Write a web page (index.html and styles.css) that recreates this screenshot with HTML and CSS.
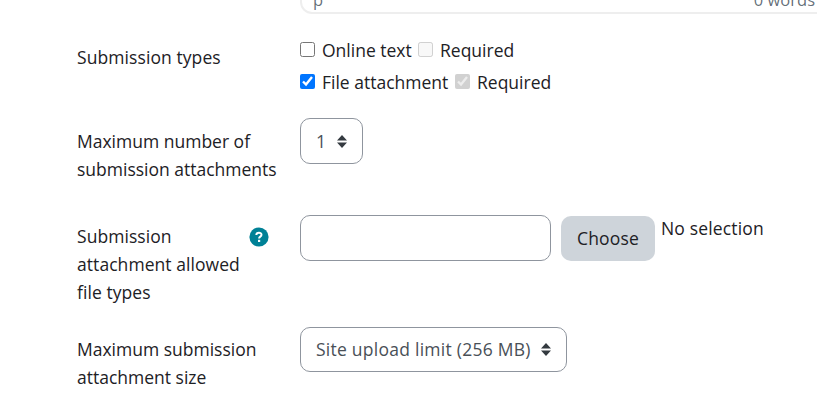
FILE: index.html
```
<!DOCTYPE html>
<html lang="en">
<head>
    <meta charset="UTF-8">
    <meta name="viewport" content="width=device-width, initial-scale=1.0">
    <title>Assignment settings</title>
    <link rel="stylesheet" href="styles.css">
</head>
<body>
    <!-- Bottom of the text editor -->
    <div class="editor">
        <span class="editor-path">p</span>
        <span class="editor-words">0 words</span>
    </div>

    <form class="settings">
        <div class="form-row types-row">
            <div class="label">Submission types</div>
            <div class="checks">
                <div class="check-line">
                    <input type="checkbox" id="onlineText">
                    <label for="onlineText" class="online">Online text</label>
                    <input type="checkbox" id="onlineRequired" disabled>
                    <label for="onlineRequired" class="required">Required</label>
                </div>
                <div class="check-line">
                    <input type="checkbox" id="fileAttachment" checked>
                    <label for="fileAttachment" class="file">File attachment</label>
                    <input type="checkbox" id="fileRequired" checked disabled>
                    <label for="fileRequired" class="required">Required</label>
                </div>
            </div>
        </div>

        <div class="form-row number-row">
            <div class="label">Maximum number of<br>submission attachments</div>
            <div class="select select-number">
                <span>1</span>
                <svg class="arrows" viewBox="0 0 10 13" width="10" height="13"><path d="M5 0l5 5.5H0zM5 13L0 7.5h10z" fill="#343a40"/></svg>
            </div>
        </div>

        <div class="form-row filetypes-row">
            <div class="label">Submission<br>attachment allowed<br>file types</div>
            <div class="help">
                <svg viewBox="0 0 20 20" width="20" height="20">
                    <circle cx="10" cy="10" r="9.6" fill="#008196"/>
                    <path d="M7.3 8C7.5 4.9 12.5 5 12.5 7.8c0 1.9-2.4 1.8-2.4 3.6" fill="none" stroke="#fff" stroke-width="2"/>
                    <rect x="9" y="12.8" width="2.2" height="2.2" fill="#fff"/>
                </svg>
            </div>
            <input type="text" class="text-input" aria-label="File types">
            <button type="button" class="choose">Choose</button>
            <div class="selection">No selection</div>
        </div>

        <div class="form-row size-row">
            <div class="label">Maximum submission<br>attachment size</div>
            <div class="select select-size">
                <span>Site upload limit (256 MB)</span>
                <svg class="arrows" viewBox="0 0 10 13" width="10" height="13"><path d="M5 0l5 5.5H0zM5 13L0 7.5h10z" fill="#343a40"/></svg>
            </div>
        </div>
    </form>
</body>
</html>
```

FILE: styles.css
```
* {
    box-sizing: border-box;
}

body {
    margin: 0;
    height: 415px;
    overflow: hidden;
    background-color: #fff;
    color: #1d2125;
    font-family: 'Open Sans', 'Noto Sans', sans-serif;
    font-size: 17.5px;
    line-height: 28px;
}

/* Editor footer */
.editor {
    display: flex;
    justify-content: space-between;
    align-items: flex-end;
    width: 540px;
    height: 14px;
    margin-left: 300px;
    padding: 0 23px 0 11px;
    border: 2px solid #eee;
    border-top: 0;
    border-radius: 0 0 12px 12px;
    color: rgba(34, 47, 62, 0.7);
    font-size: 16.5px;
    line-height: 24px;
}

.editor-words {
    white-space: nowrap;
}

/* Form rows */
.settings {
    padding: 22px 0 0 77px;
}

.form-row {
    display: flex;
    align-items: flex-start;
}

.label {
    width: 223px;
    padding-top: 8px;
    white-space: nowrap;
}

.types-row {
    height: 82px;
}

.types-row .label {
    padding-top: 7px;
    letter-spacing: 0.08px;
}

.number-row {
    height: 97px;
}

.number-row .label {
    padding-top: 9px;
}

.filetypes-row {
    height: 112px;
}

.filetypes-row .label {
    width: 172px;
    padding-top: 7px;
    letter-spacing: 0.06px;
}

/* Checkboxes */
.check-line {
    display: flex;
    align-items: center;
    height: 28px;
    margin-bottom: 4px;
    white-space: nowrap;
}

.check-line input {
    width: 15px;
    height: 15px;
    margin: 0 7px 2px 0;
}

.online {
    width: 96px;
}

.file {
    width: 133px;
}

/* Selects */
.select {
    display: flex;
    align-items: center;
    justify-content: space-between;
    height: 46px;
    padding: 0 15px;
    border: 1px solid #8f959e;
    border-radius: 10px;
    color: #495057;
    white-space: nowrap;
}

.select-number {
    width: 63px;
}

.select-size {
    width: 267px;
    height: 45px;
    letter-spacing: 0.25px;
}

.select-size span {
    padding-bottom: 2px;
}

/* File types */
.help {
    width: 51px;
    padding-top: 12px;
}

.help svg {
    display: block;
}

.text-input {
    width: 251px;
    height: 46px;
    border: 1px solid #8f959e;
    border-radius: 10px;
}

.choose {
    width: 94px;
    height: 45px;
    margin: 1px 6px 0 10px;
    padding: 0 0 2px;
    border: 0;
    border-radius: 10px;
    background-color: #ced4da;
    color: #1d2125;
    font: inherit;
    letter-spacing: 0.15px;
}

.selection {
    margin-top: -1px;
    letter-spacing: 0.15px;
    white-space: nowrap;
}
```
